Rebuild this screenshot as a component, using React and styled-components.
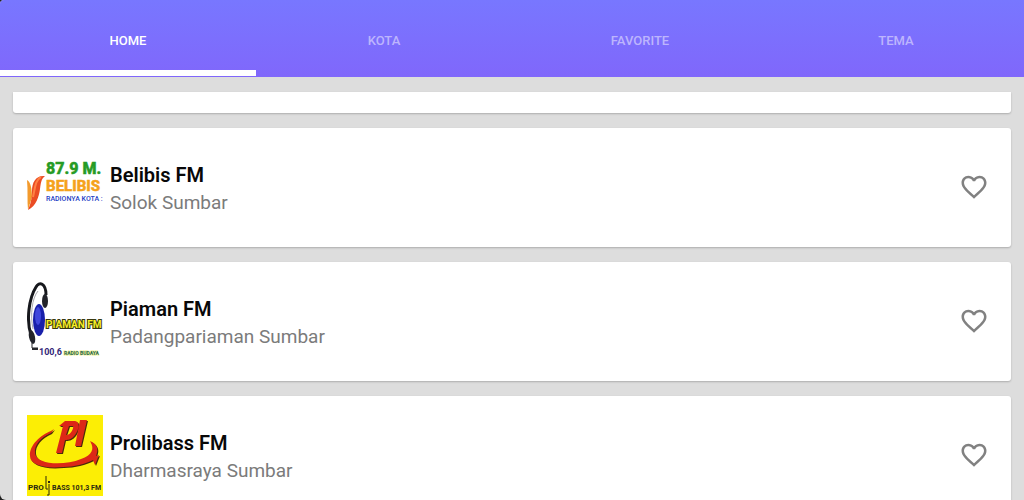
import React, { useState } from "react";
import styled, { createGlobalStyle } from "styled-components";

const GlobalStyle = createGlobalStyle`
  * { box-sizing: border-box; }
  body {
    margin: 0;
    background: #222;
    font-family: Roboto, "Liberation Sans", sans-serif;
    overflow: hidden;
  }
`;

const Screen = styled.div`
  display: flex;
  flex-direction: column;
  height: 100vh;
  overflow: hidden;
  background: #dddddd;
  border-radius: 4px 0 0 6px;
`;

const TabBar = styled.nav`
  flex: none;
  display: grid;
  grid-template-columns: repeat(4, 1fr);
  height: 77px;
  padding-bottom: 1px;
  background: linear-gradient(#7877ff, #8067fb);
`;

const Tab = styled.button`
  padding: 12px 0 0;
  border: 0;
  border-bottom: 6px solid ${(p) => (p.$active ? "#ffffff" : "transparent")};
  background: transparent;
  color: ${(p) => (p.$active ? "#ffffff" : "#bdb5fd")};
  font: 500 13px/20px Roboto, "Liberation Sans", sans-serif;
  text-transform: uppercase;
  cursor: pointer;
`;

const StationList = styled.ul`
  flex: 1;
  display: flex;
  flex-direction: column;
  gap: 15px;
  min-height: 0;
  margin: 0;
  padding: 15px 13px 0;
  list-style: none;
  overflow: hidden;
`;

const Card = styled.li`
  flex: none;
  display: flex;
  align-items: center;
  gap: 7px;
  height: 119px;
  padding: 0 22px 0 14px;
  background: #ffffff;
  border-radius: 3px;
  box-shadow: 0 1px 2px rgba(0, 0, 0, 0.22);
`;

const CardEnd = styled.li`
  flex: none;
  height: 21px;
  background: #ffffff;
  border-radius: 0 0 3px 3px;
  box-shadow: 0 1px 2px rgba(0, 0, 0, 0.22);
`;

const Logo = styled.svg`
  flex: none;
  width: 76px;
  height: 81px;
`;

const Info = styled.div`
  flex: 1;
  min-width: 0;
  padding-top: 2px;
`;

const Name = styled.h2`
  margin: 0;
  color: #080808;
  font-size: 20px;
  font-weight: 600;
  line-height: 28px;
`;

const Place = styled.p`
  margin: 0;
  color: #7b7b7b;
  font-size: 19px;
  line-height: 28px;
`;

const LikeButton = styled.button`
  display: flex;
  padding: 0 0 2px;
  border: 0;
  background: transparent;
  color: ${(p) => (p.$liked ? "#e53935" : "#818181")};
  cursor: pointer;
`;

const LogoText = styled.text`
  font-family: Roboto, "Liberation Sans", sans-serif;
  font-size: ${(p) => p.$size}px;
  font-weight: ${(p) => p.$weight || 700};
`;

function BelibisLogo() {
  return (
    <Logo viewBox="0 0 76 81" aria-hidden="true">
      <path d="M0 33C4 35 5 43 5 50L1 63C0 54 1 43 0 33Z" fill="#f39a2c" />
      <path d="M18 29C9 28 5 35 5 44C5 53 3 58 1 63C9 59 12 50 13 42C14 36 14 32 18 29Z" fill="#ea4c24" />
      <path d="M14 30C8 33 8 42 6 50" fill="none" stroke="#ff8044" strokeWidth="2" />
      <LogoText x="19" y="27" $size={16} $weight={800} fill="#269b25" stroke="#269b25" strokeWidth="0.5">87.9 M.</LogoText>
      <LogoText x="19" y="44" $size={15} $weight={800} fill="#f5a21b" stroke="#f5a21b" strokeWidth="0.5">BELIBIS</LogoText>
      <LogoText x="19" y="54" $size={7} $weight={500} fill="#2541c5">RADIONYA KOTA :</LogoText>
    </Logo>
  );
}

function PiamanLogo() {
  return (
    <Logo viewBox="0 0 76 81" aria-hidden="true">
      <path d="M4 54C-1 39 2 17 9 6C12 0 19 2 19 14" fill="none" stroke="#17181d" strokeWidth="3" />
      <path d="M6 48C3 34 5 17 11 10" fill="none" stroke="#aaaab0" strokeWidth="1" />
      <ellipse cx="18" cy="20" rx="3" ry="7" fill="#22232a" />
      <ellipse cx="5" cy="56" rx="3" ry="7" fill="#22232a" transform="rotate(-12 5 56)" />
      <ellipse cx="12" cy="39" rx="6" ry="16" fill="#1920aa" />
      <ellipse cx="11" cy="35" rx="3" ry="9" fill="#4047dc" />
      <path d="M5 62V67H11" fill="none" stroke="#26272b" strokeWidth="1" />
      <path d="M5 68H11" stroke="#26272b" strokeWidth="2" />
      <LogoText x="19" y="47" $size={10} fill="#f6ed27" stroke="#38380d" strokeWidth="2" paintOrder="stroke">PIAMAN FM</LogoText>
      <LogoText x="12" y="74" $size={9} fill="#332778">100,6</LogoText>
      <LogoText x="37" y="74" $size={5} fill="#286755" stroke="#eef08a" strokeWidth="1" paintOrder="stroke">RADIO BUDAYA</LogoText>
    </Logo>
  );
}

function ProlibassLogo() {
  return (
    <Logo viewBox="0 0 76 81" aria-hidden="true">
      <rect width="76" height="81" fill="#fcee05" />
      <g fill="#4b2a0b" transform="translate(1 1)">
        <path d="M27 14L24 18C14 22 7 30 8 38C9 50 37 51 54 44C65 40 68 34 63 26C72 30 71 36 69 41L72 40L68 50L66 45C58 49 47 52 36 52C15 54 3 49 3 41C2 30 14 20 24 16Z" />
        <path d="M38 6H47C54 6 52 15 48 20C45 24 42 25 38 25L35 38H29L36 11H32ZM42 11L39 20C44 20 47 13 46 11ZM53 5H60L54 31H48Z" fillRule="evenodd" />
      </g>
      <g fill="#dc2717">
        <path d="M27 14L24 18C14 22 7 30 8 38C9 50 37 51 54 44C65 40 68 34 63 26C72 30 71 36 69 41L72 40L68 50L66 45C58 49 47 52 36 52C15 54 3 49 3 41C2 30 14 20 24 16Z" />
        <path d="M38 6H47C54 6 52 15 48 20C45 24 42 25 38 25L35 38H29L36 11H32ZM42 11L39 20C44 20 47 13 46 11ZM53 5H60L54 31H48Z" fillRule="evenodd" />
      </g>
      <LogoText x="1" y="75" $size={8} fill="#292710">PRO</LogoText>
      <path d="M19 61V74H21M22 69V80H20" fill="none" stroke="#292710" strokeWidth="1" />
      <rect x="21" y="66" width="2" height="2" fill="#292710" />
      <LogoText x="25" y="75" $size={7} fill="#292710">BASS 101,3 FM</LogoText>
    </Logo>
  );
}

function LikeToggle({ name }) {
  const [liked, setLiked] = useState(false);
  return (
    <LikeButton type="button" $liked={liked} aria-pressed={liked} aria-label={`Favorite ${name}`} onClick={() => setLiked(!liked)}>
      <svg width="30" height="30" viewBox="0 0 24 24" fill="currentColor" aria-hidden="true">
        <path d="M16.5 3c-1.74 0-3.41.81-4.5 2.09C10.91 3.81 9.24 3 7.5 3 4.42 3 2 5.42 2 8.5c0 3.78 3.4 6.86 8.55 11.54L12 21.35l1.45-1.32C18.6 15.36 22 12.28 22 8.5 22 5.42 19.58 3 16.5 3zm-4.4 15.55l-.1.1-.1-.1C7.14 14.24 4 11.39 4 8.5 4 6.5 5.5 5 7.5 5c1.54 0 3.04.99 3.57 2.36h1.87C13.46 5.99 14.96 5 16.5 5c2 0 3.5 1.5 3.5 3.5 0 2.89-3.14 5.74-7.9 10.05z" />
      </svg>
    </LikeButton>
  );
}

const TABS = ["Home", "Kota", "Favorite", "Tema"];

const STATIONS = [
  { name: "Belibis FM", place: "Solok Sumbar", Art: BelibisLogo },
  { name: "Piaman FM", place: "Padangpariaman Sumbar", Art: PiamanLogo },
  { name: "Prolibass FM", place: "Dharmasraya Sumbar", Art: ProlibassLogo },
];

export default function App() {
  const [active, setActive] = useState("Home");
  return (
    <>
      <GlobalStyle />
      <Screen>
        <TabBar>
          {TABS.map((tab) => (
            <Tab key={tab} type="button" $active={tab === active} onClick={() => setActive(tab)}>
              {tab}
            </Tab>
          ))}
        </TabBar>
        <StationList>
          <CardEnd aria-hidden="true" />
          {STATIONS.map(({ name, place, Art }) => (
            <Card key={name}>
              <Art />
              <Info>
                <Name>{name}</Name>
                <Place>{place}</Place>
              </Info>
              <LikeToggle name={name} />
            </Card>
          ))}
        </StationList>
      </Screen>
    </>
  );
}
